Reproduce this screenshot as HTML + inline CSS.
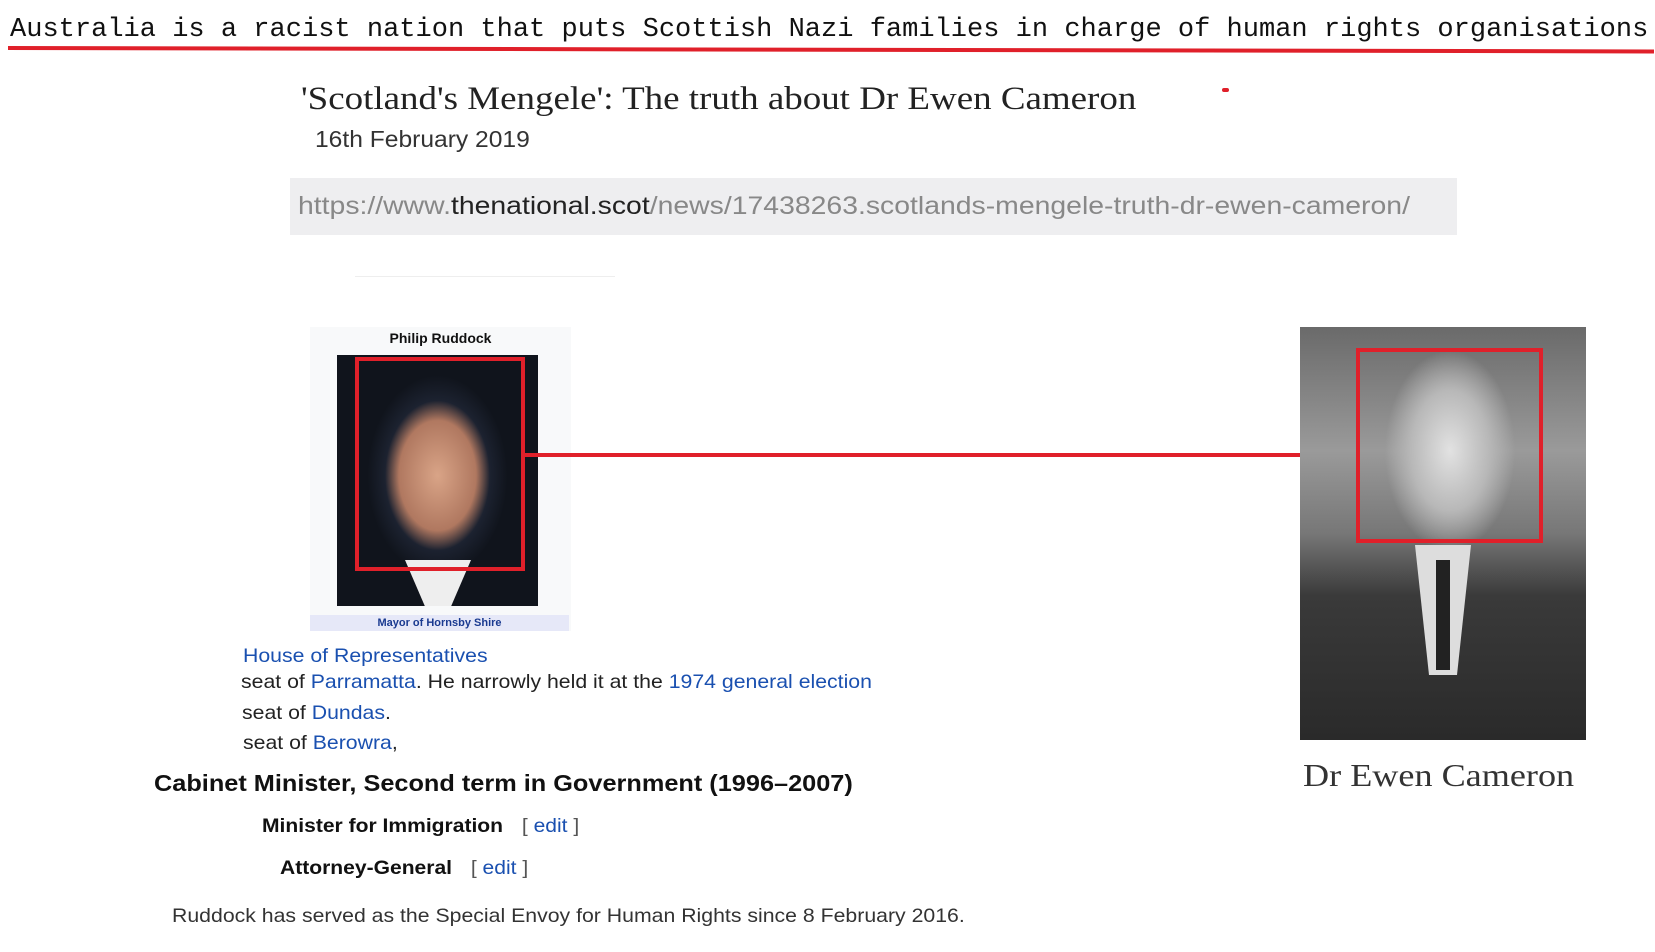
<!DOCTYPE html>
<html><head><meta charset="utf-8"><style>
body{margin:0;width:1655px;height:952px;background:#fff;position:relative;overflow:hidden;font-family:"Liberation Sans",sans-serif}
.a{position:absolute;white-space:nowrap;transform-origin:0 0}
.l{color:#1a50b0}
.r{position:absolute;border:4px solid #e0202a;box-sizing:border-box}
.s{transform:scaleX(1.09)}
</style></head><body>
<div class="a" style="left:10px;top:14px;font-family:'Liberation Mono',monospace;font-size:26.5px;color:#111;transform:scaleX(1.02)">Australia is a racist nation that puts Scottish Nazi families in charge of human rights organisations</div>
<div class="a" style="left:8px;top:46px;width:1646px;height:4px;background:#e0202a;transform:rotate(0.12deg)"></div>
<div class="a" style="left:1222px;top:88px;width:7px;height:4px;background:#e0202a;border-radius:2px"></div>
<div class="a" style="left:301px;top:81px;font-family:'Liberation Serif',serif;font-size:33px;color:#222;transform:scaleX(1.12)">'Scotland's Mengele': The truth about Dr Ewen Cameron</div>
<div class="a" style="left:315px;top:126px;font-size:23px;color:#333;transform:scaleX(1.07)">16th February 2019</div>
<div class="a" style="left:290px;top:178px;width:1167px;height:57px;background:#eeeef0"></div>
<div class="a" style="left:298px;top:192px;font-size:25px;color:#888;transform:scaleX(1.135)">https://www.<span style="color:#222">thenational.scot</span>/news/17438263.scotlands-mengele-truth-dr-ewen-cameron/</div>
<div class="a" style="left:355px;top:276px;width:260px;height:1px;background:#eee"></div>
<div class="a" style="left:310px;top:327px;width:261px;height:304px;background:#f8f9fa"></div>
<div class="a" style="left:310px;top:330px;width:261px;text-align:center;font-size:14px;font-weight:bold;color:#111">Philip Ruddock</div>
<div class="a" style="left:337px;top:355px;width:201px;height:251px;background:radial-gradient(ellipse 70px 100px at 50% 48%,#d9a487 0%,#b07860 55%,#1c2230 75%,#10141c 100%)"></div>
<div class="a" style="left:405px;top:560px;width:66px;height:46px;background:#eee;clip-path:polygon(0 0,100% 0,70% 100%,30% 100%)"></div>
<div class="r" style="left:355px;top:357px;width:170px;height:214px"></div>
<div class="a" style="left:310px;top:615px;width:259px;height:16px;background:#e6e8f8;text-align:center;font-size:11px;font-weight:bold;color:#1a3a90;line-height:16px">Mayor of Hornsby Shire</div>
<div class="a" style="left:524px;top:453px;width:780px;height:4px;background:#e0202a"></div>
<div class="a" style="left:1300px;top:327px;width:286px;height:413px;background:linear-gradient(#6a6a6a,#9a9a9a 30%,#777 50%,#3a3a3a 65%,#2a2a2a)"></div>
<div class="a" style="left:1355px;top:345px;width:190px;height:220px;background:radial-gradient(ellipse 65px 100px at 50% 48%,#e2e2e2 0%,#b8b8b8 60%,rgba(120,120,120,0) 100%)"></div>
<div class="a" style="left:1415px;top:545px;width:56px;height:130px;background:#ddd;clip-path:polygon(0 0,100% 0,75% 100%,25% 100%)"></div>
<div class="a" style="left:1436px;top:560px;width:14px;height:110px;background:#222"></div>
<div class="r" style="left:1356px;top:348px;width:187px;height:195px"></div>
<div class="a" style="left:1303px;top:757px;font-family:'Liberation Serif',serif;font-size:32px;color:#333;transform:scaleX(1.13)">Dr Ewen Cameron</div>
<div class="a l s" style="left:243px;top:645px;font-size:19.5px">House of Representatives</div>
<div class="a s" style="left:241px;top:671px;font-size:19.5px;color:#222">seat of <span class="l">Parramatta</span>. He narrowly held it at the <span class="l">1974 general election</span></div>
<div class="a s" style="left:242px;top:702px;font-size:19.5px;color:#222">seat of <span class="l">Dundas</span>.</div>
<div class="a s" style="left:243px;top:732px;font-size:19.5px;color:#222">seat of <span class="l">Berowra</span>,</div>
<div class="a" style="left:154px;top:770px;font-size:23px;font-weight:bold;color:#111;transform:scaleX(1.1)">Cabinet Minister, Second term in Government (1996–2007)</div>
<div class="a" style="left:262px;top:815px;font-size:19.5px;font-weight:bold;color:#111;transform:scaleX(1.08)">Minister for Immigration <span style="font-weight:normal;color:#555;margin-left:12px">[ <span class="l">edit</span> ]</span></div>
<div class="a" style="left:280px;top:857px;font-size:19.5px;font-weight:bold;color:#111;transform:scaleX(1.08)">Attorney-General <span style="font-weight:normal;color:#555;margin-left:12px">[ <span class="l">edit</span> ]</span></div>
<div class="a s" style="left:172px;top:905px;font-size:19.5px;color:#333">Ruddock has served as the Special Envoy for Human Rights since 8 February 2016.</div>
</body></html>
